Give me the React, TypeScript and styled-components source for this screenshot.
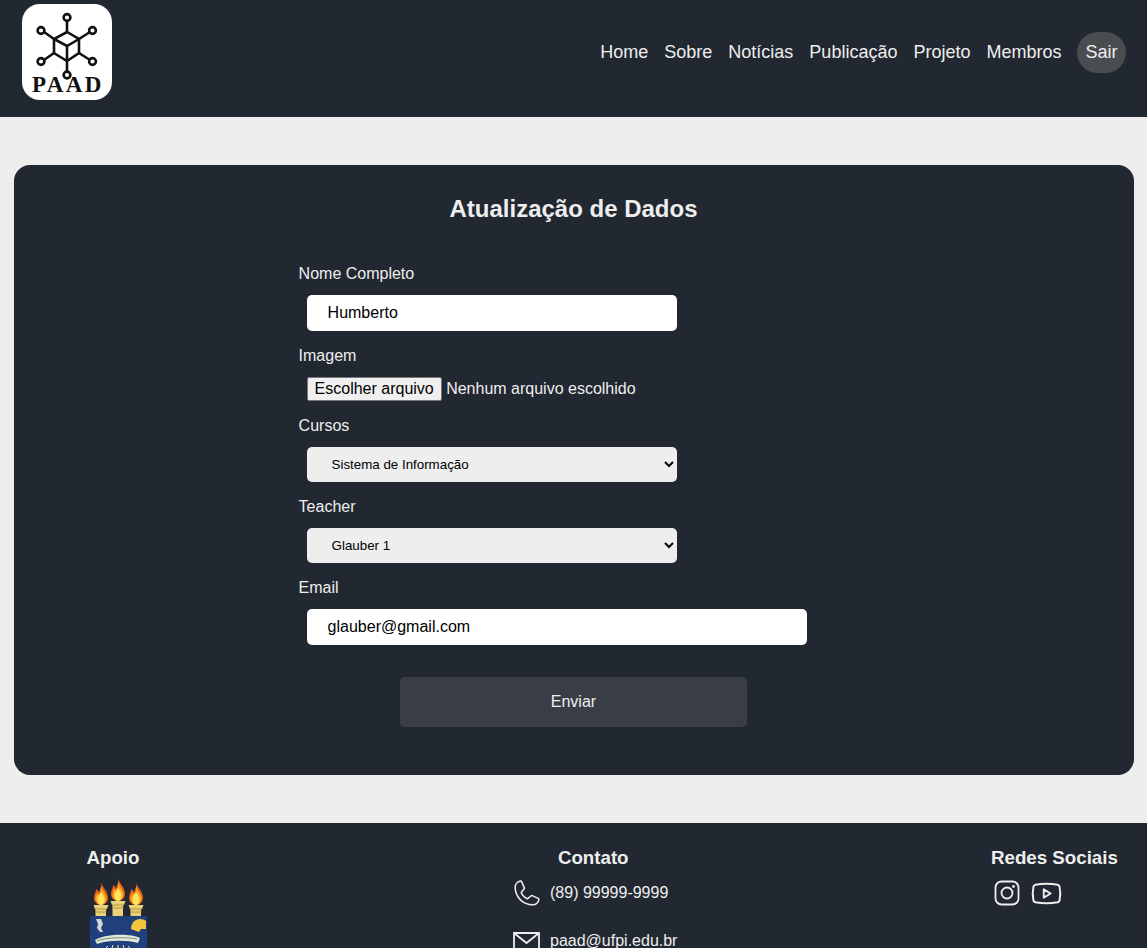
import * as React from 'react';
import styled, { createGlobalStyle } from 'styled-components';
import { Youtube } from 'lucide-react';
import { PiPhoneLight } from 'react-icons/pi';

const colors = {
  dark: '#222831',
  light: '#eeeeee',
  button: '#393e46',
};

const GlobalStyle = createGlobalStyle`
  html, body {
    margin: 0;
    padding: 0;
    overflow: hidden;
    height: 948px;
  }
  body {
    background: ${colors.light};
    font-family: "Liberation Sans", Arial, sans-serif;
  }
`;

function Logo() {
  const nodes = [
    [67, 17.5],
    [41, 30.5],
    [92.5, 30.5],
    [41, 61.5],
    [92.5, 61.5],
    [67, 75],
  ];
  return (
    <LogoBox viewBox="22 4 90 96">
      <g fill="none" stroke="#111" strokeWidth="2.6">
        <path d="M67 32 79 39V53L67 61 54 53V39Z" />
        <path d="M54 39 67 46 79 39M67 46V71M67 21V32M44 32 54 39M90 32 79 39M44 60 54 53M90 60 79 53" />
        {nodes.map(([cx, cy]) => (
          <circle key={`${cx}-${cy}`} cx={cx} cy={cy} r="3.4" fill="#fff" />
        ))}
      </g>
      <LogoText x="68" y="92" textAnchor="middle">
        PAAD
      </LogoText>
    </LogoBox>
  );
}

function Torch({ x, top }: { x: number; top: number }) {
  const cupTop = top + 22;
  const stem = 916 - cupTop - 4;
  return (
    <g>
      <path
        d={`M${x + 0.5} ${top}c1 5 6.500 8 6.500 15 0 4-3 7-7 7s-7-3-7-7c0-3 1.500-6 2.500-9 1 1 2 2 2.500 3 1.500-3 2.500-6 2.500-9z`}
        fill="#e2601c"
      />
      <path
        d={`M${x + 0.5} ${top + 4}c1 4 5 7 5 11.500 0 3-2.500 6.500-5.500 6.500s-5.500-3-5.500-6.500c0-2 1-4 2-6 1 1 1 2 2 2 1-2 1.500-4 1.500-7.500z`}
        fill="#fba81f"
      />
      <path
        d={`M${x} ${top + 9}c1 2 3.500 4.500 3.500 7 0 3-1.500 6-3.500 6s-3.500-3-3.500-6c0-2.500 2.500-5 3.500-7z`}
        fill="#ffe55e"
      />
      <path
        d={`M${x - 7.500} ${cupTop}h15l-1.500 4h-1v${stem}h-10.500v${-stem}h-0.500z`}
        fill="#e9d07a"
      />
      <path
        d={`M${x - 6} ${cupTop + 4}h12M${x - 5.500} ${cupTop + 7}h11`}
        stroke="#b8963c"
        strokeWidth="1"
      />
    </g>
  );
}

function UfpiEmblem() {
  return (
    <Emblem viewBox="90 879 57 100">
      <Torch x={101} top={883} />
      <Torch x={118} top={879} />
      <Torch x={136} top={883} />
      <rect x="90" y="916" width="57" height="63" fill="#1f3f7d" />
      <path d="M96 919h5l2 5-2 4 2 4h-3l-3-4 1-4z" fill="#d5d5d5" />
      <path d="M131 929c0-6 4-10 9-10 3 0 5 1 6 2v8h-5l-2 3z" fill="#f2c53a" />
      <path d="M95 940c10-6 35-7 45-2l-2 5c-11-3-30-3-41 1z" fill="#dfe8d8" />
      <path d="M97 941c10-4 29-4 40-2" stroke="#5d7b58" strokeWidth="0.8" fill="none" />
      <path
        d="M118 945v3M113 945l-1 3M123 945l1 3M108 946l-2 2M128 946l2 2"
        stroke="#f3e6a4"
        strokeWidth="1"
      />
    </Emblem>
  );
}

function App() {
  return (
    <>
      <GlobalStyle />
      <Header>
        <Logo />
        <Nav>
          <NavLink href="#">Home</NavLink>
          <NavLink href="#">Sobre</NavLink>
          <NavLink href="#">Notícias</NavLink>
          <NavLink href="#">Publicação</NavLink>
          <NavLink href="#">Projeto</NavLink>
          <NavLink href="#">Membros</NavLink>
          <LogoutLink href="#">Sair</LogoutLink>
        </Nav>
      </Header>
      <Main>
        <Card>
          <Title>Atualização de Dados</Title>
          <Form onSubmit={e => e.preventDefault()}>
            <Label htmlFor="name">Nome Completo</Label>
            <TextInput id="name" type="text" defaultValue="Humberto" $width={370} />
            <Label htmlFor="image">Imagem</Label>
            <FileRow>
              <FileButton type="button" id="image">
                Escolher arquivo
              </FileButton>
              <span>Nenhum arquivo escolhido</span>
            </FileRow>
            <Label htmlFor="course">Cursos</Label>
            <Select id="course" defaultValue="si">
              <option value="si">Sistema de Informação</option>
            </Select>
            <Label htmlFor="teacher">Teacher</Label>
            <Select id="teacher" defaultValue="g1">
              <option value="g1">Glauber 1</option>
            </Select>
            <Label htmlFor="email">Email</Label>
            <TextInput id="email" type="email" defaultValue="glauber@gmail.com" $width={500} />
            <SubmitButton type="submit">Enviar</SubmitButton>
          </Form>
        </Card>
      </Main>
      <Footer>
        <SupportColumn>
          <FooterTitle>Apoio</FooterTitle>
          <UfpiEmblem />
        </SupportColumn>
        <ContactColumn>
          <FooterTitle>Contato</FooterTitle>
          <ContactRow>
            <PhoneIcon size={33} />
            <span>(89) 99999-9999</span>
          </ContactRow>
          <ContactRow>
            <MailIcon viewBox="0 0 27 18">
              <path d="M1 1h25v16H1zM1 1l12.500 10L26 1" />
            </MailIcon>
            <span>paad@ufpi.edu.br</span>
          </ContactRow>
        </ContactColumn>
        <div>
          <FooterTitle>Redes Sociais</FooterTitle>
          <SocialRow>
            <SocialIcon viewBox="0 0 26 26">
              <rect x="1.500" y="1.500" width="23" height="23" rx="6" />
              <circle cx="13" cy="13" r="5.500" />
              <circle cx="19.500" cy="6.500" r="1.400" fill="#eeeeee" stroke="none" />
            </SocialIcon>
            <VideoIcon size={33} strokeWidth={1.4} />
          </SocialRow>
        </div>
      </Footer>
    </>
  );
}

const Header = styled.header`
  display: flex;
  align-items: flex-start;
  justify-content: space-between;
  height: 117px;
  padding: 4px 21px 0 22px;
  box-sizing: border-box;
  background: ${colors.dark};
`;

const LogoBox = styled.svg`
  width: 90px;
  height: 96px;
  background: #fff;
  border-radius: 18px;
`;

const LogoText = styled.text`
  font-family: 'Liberation Serif', serif;
  font-weight: bold;
  font-size: 23px;
  letter-spacing: 2.400px;
  fill: #111;
`;

const Nav = styled.nav`
  display: flex;
  align-items: center;
  height: 96px;
`;

const NavLink = styled.a`
  padding: 0 8px;
  color: ${colors.light};
  font-size: 18px;
  text-decoration: none;
`;

const LogoutLink = styled(NavLink)`
  margin-left: 7.500px;
  padding: 11px 8.500px;
  line-height: 19px;
  border-radius: 21px;
  background: #4a4d4f;
`;

const Main = styled.main`
  padding: 48px 13px 48px 14px;
`;

const Card = styled.section`
  height: 610px;
  box-sizing: border-box;
  padding-top: 30px;
  border-radius: 16px;
  background: ${colors.dark};
  color: ${colors.light};
`;

const Title = styled.h2`
  margin: 0 1px 0 0;
  font-size: 24px;
  line-height: 28px;
  text-align: center;
`;

const Form = styled.form`
  display: flex;
  flex-direction: column;
  align-items: flex-start;
  margin: 42px 0 0 284.600px;
`;

const Label = styled.label`
  margin-bottom: 12px;
  font-size: 16px;
  line-height: 18px;
`;

const TextInput = styled.input<{ $width: number }>`
  width: ${props => props.$width}px;
  height: 36px;
  margin: 0 0 16px 8.400px;
  padding: 0 20.600px;
  box-sizing: border-box;
  border: none;
  border-radius: 5px;
  outline: none;
  background: #fff;
  color: #000;
  font-family: inherit;
  font-size: 16px;
`;

const FileRow = styled.div`
  display: flex;
  align-items: center;
  gap: 4px;
  margin: 0 0 16px 8.400px;
  font-size: 16px;
`;

const FileButton = styled.button`
  height: 24px;
  padding: 0 7.400px 0 6.600px;
  border: 1px solid #767676;
  border-radius: 2px;
  background: #efefef;
  color: #000;
  font-family: inherit;
  font-size: 16px;
`;

const Select = styled.select`
  width: 370px;
  height: 35px;
  margin: 0 0 16px 8.400px;
  padding: 0 0 0 20.600px;
  border: none;
  border-radius: 5px;
  background: ${colors.light};
  color: #000;
  font-family: inherit;
  font-size: 13.330px;
`;

const SubmitButton = styled.button`
  align-self: flex-start;
  width: 347px;
  height: 50px;
  margin: 16px 0 0 101.400px;
  border: none;
  border-radius: 5px;
  background: ${colors.button};
  color: ${colors.light};
  font-family: inherit;
  font-size: 16px;
`;

const Footer = styled.footer`
  display: grid;
  grid-template-columns: 426.500px 478px auto;
  height: 125px;
  padding: 24px 0 0 86.500px;
  box-sizing: border-box;
  overflow: hidden;
  background: ${colors.dark};
  color: ${colors.light};
`;

const FooterTitle = styled.h3`
  margin: 0;
  font-size: 18.720px;
  line-height: 22px;
`;

const SupportColumn = styled.div`
  display: flex;
  flex-direction: column;
  align-items: flex-start;
`;

const Emblem = styled.svg`
  width: 57px;
  height: 100px;
  margin: 10px 0 0 3.500px;
`;

const ContactColumn = styled.div`
  display: flex;
  flex-direction: column;
  justify-self: start;
  ${FooterTitle} {
    align-self: center;
    margin: 0 4px 9px 0;
  }
`;

const ContactRow = styled.div`
  display: flex;
  align-items: center;
  gap: 10px;
  height: 30px;
  margin-bottom: 18px;
  font-size: 16px;
`;

const PhoneIcon = styled(PiPhoneLight)`
  margin: 0 -3px 0 -3px;
`;

const MailIcon = styled.svg`
  width: 27px;
  height: 18px;
  fill: none;
  stroke: ${colors.light};
  stroke-width: 1.800;
`;

const SocialRow = styled.div`
  display: flex;
  align-items: center;
  gap: 10px;
  margin: 7px 0 0 3px;
  svg {
    flex-shrink: 0;
  }
`;

const SocialIcon = styled.svg`
  width: 26px;
  height: 26px;
  fill: none;
  stroke: ${colors.light};
  stroke-width: 1.800;
`;

const VideoIcon = styled(Youtube)`
  margin-top: 1px;
`;

export default App;
